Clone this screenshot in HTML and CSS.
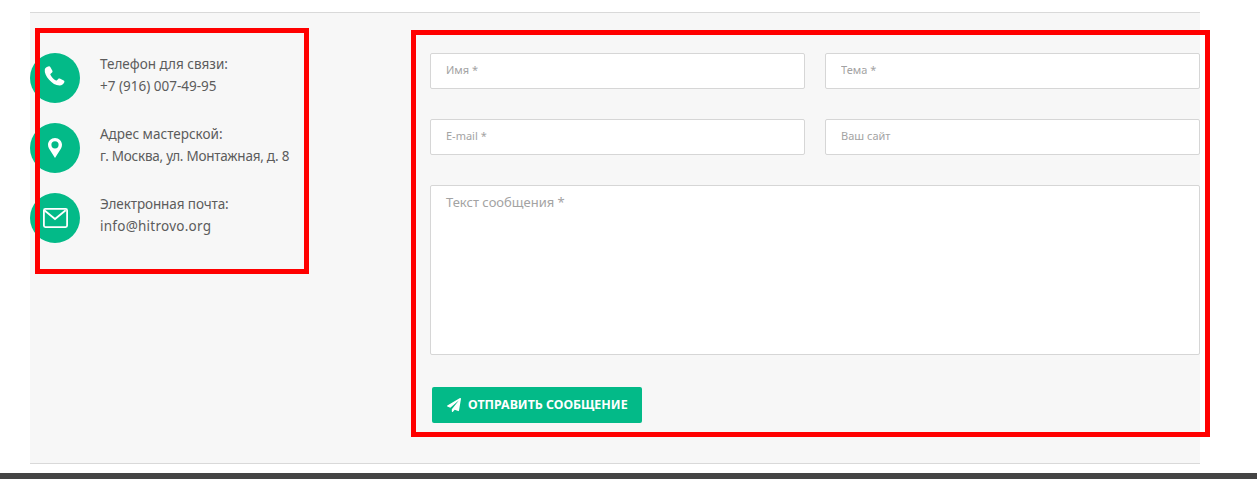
FILE: index.html
```html
<!DOCTYPE html>
<html lang="ru">
<head>
<meta charset="utf-8">
<title>Контакты</title>
<link rel="stylesheet" href="styles.css">
</head>
<body>
<section class="contact">
  <ul class="info">
    <li class="info-row">
      <span class="badge">
        <svg viewBox="0 0 50 50" width="50" height="50"><path class="solid" d="M18.4 13.4c.8-.4 1.5-.2 1.9.5l2.100 3.800c.3.600.2 1.200-.3 1.700l-1.500 1.300c-.3.300-.3.600-.2 1 .9 2 3.200 4.600 5.600 5.800.4.2.7.100 1-.2l1.200-1.400c.4-.5 1-.6 1.600-.3l3.900 2c.7.4.9 1 .6 1.700-.8 2-2.400 3.200-4.600 3.300-3.800.1-7.600-2.400-10.600-5.800-3-3.400-4.800-7.300-4.300-10.400.3-1.400 1.400-2.300 3.400-3z"/></svg>
      </span>
      <div class="info-text"><p>Телефон для связи:</p><p>+7 (916) 007-49-95</p></div>
    </li>
    <li class="info-row">
      <span class="badge">
        <svg viewBox="0 0 50 50" width="50" height="50"><path class="solid" fill-rule="evenodd" d="M25 15c-3.900 0-7 3-7 6.800 0 1.300.4 2.500 1 3.600L25 35l6-9.600c.6-1.100 1-2.300 1-3.600C32 18 28.900 15 25 15zm0 3.200a3.600 3.600 0 1 1 0 7.200 3.600 3.600 0 0 1 0-7.200z"/></svg>
      </span>
      <div class="info-text"><p>Адрес мастерской:</p><p class="tight">г. Москва, ул. Монтажная, д. 8</p></div>
    </li>
    <li class="info-row">
      <span class="badge">
        <svg viewBox="0 0 50 50" width="50" height="50"><rect class="line" x="13.900" y="15.900" width="23.200" height="18.200" rx="1.500"/><path class="line" d="M14.300 17.300L25 26l10.700-8.700"/></svg>
      </span>
      <div class="info-text"><p class="narrow">Электронная почта:</p><p class="wide">info@hitrovo.org</p></div>
    </li>
  </ul>
  <form class="form">
    <input class="field" type="text" placeholder="Имя *">
    <input class="field" type="text" placeholder="Тема *">
    <input class="field" type="text" placeholder="E-mail *">
    <input class="field" type="text" placeholder="Ваш сайт">
    <textarea class="field message" placeholder="Текст сообщения *"></textarea>
    <button class="send" type="button">
      <svg viewBox="0 0 512 512" width="14" height="14"><path class="solid" d="M476 3.200L12.500 270.600c-18.100 10.400-15.800 35.600 2.200 43.200L121 358.400l287.300-253.200c5.500-4.900 13.300 2.600 8.600 8.300L176 407v80.500c0 23.600 28.500 32.900 42.500 15.800L282 426l124.600 52.200c14.200 6 30.400-2.900 33-18.200l72-432C515 7.800 493.300-6.800 476 3.200z"/></svg>
      <span class="send-label">ОТПРАВИТЬ СООБЩЕНИЕ</span>
    </button>
  </form>
  <div class="mark mark-left"></div>
  <div class="mark mark-right"></div>
</section>
<footer class="bar"></footer>
</body>
</html>
```
FILE: styles.css
```css
html, body {
  margin: 0;
  padding: 0;
  background: #fff;
  overflow: hidden;
}
body {
  padding-top: 12px;
  font-family: "Noto Sans", "Open Sans", sans-serif;
}
.contact {
  position: relative;
  box-sizing: border-box;
  width: 1170px;
  height: 452px;
  margin-left: 30px;
  padding: 40px 0 0;
  display: flex;
  background: #f7f7f7;
  border-top: 1px solid #d9d9d9;
  border-bottom: 1px solid #d9d9d9;
}
.info {
  list-style: none;
  margin: 0;
  padding: 0;
  width: 400px;
  display: flex;
  flex-direction: column;
  gap: 20px;
}
.info-row {
  display: flex;
  gap: 20px;
  height: 50px;
}
.badge {
  flex: none;
  width: 50px;
  height: 50px;
  border-radius: 50%;
  background: #03ba88;
}
.badge svg { display: block; }
.solid { fill: #fff; }
.line {
  fill: none;
  stroke: #fff;
  stroke-width: 1.8;
}
.info-text {
  color: #5c5c5c;
  font-size: 13.5px;
  line-height: 22px;
}
.info-text p { margin: 0; }
.info-text .tight { letter-spacing: -0.24px; }
.info-text .narrow { letter-spacing: -0.1px; }
.info-text .wide { letter-spacing: 0.25px; }
.form {
  flex: 1;
  display: grid;
  grid-template-columns: 375px 375px;
  grid-template-rows: 36px 36px 170px 36px;
  column-gap: 20px;
  row-gap: 30px;
  align-content: start;
}
.field {
  box-sizing: border-box;
  width: 100%;
  height: 100%;
  margin: 0;
  padding: 0 15px 4px;
  background: #fff;
  border: 1px solid #d6d6d6;
  border-radius: 2px;
  outline: none;
  font-family: inherit;
  font-size: 11px;
  color: #555;
}
.field::placeholder {
  color: #a3a3a3;
  opacity: 1;
}
.message {
  grid-column: 1 / 3;
  padding: 7px 15px;
  font-size: 13px;
  resize: none;
  display: block;
}
.send {
  justify-self: start;
  margin: 2px 0 0 2px;
  box-sizing: border-box;
  width: 210px;
  height: 36px;
  display: flex;
  align-items: center;
  gap: 8px;
  padding: 0 0 0 15px;
  background: #03ba88;
  border: 0;
  border-radius: 2px;
  color: #fff;
  font-family: inherit;
  font-size: 12.4px;
  font-weight: 700;
  white-space: nowrap;
}
.send svg { flex: none; }
.send-label { margin: -2px 0 0 -1px; }
.mark {
  position: absolute;
  box-sizing: border-box;
  border: 5px solid #f00;
  pointer-events: none;
}
.mark-left {
  left: 5px;
  top: 15px;
  width: 274px;
  height: 246px;
}
.mark-right {
  left: 381px;
  top: 17px;
  width: 799px;
  height: 407px;
}
.bar {
  height: 6px;
  margin-top: 9px;
  background: #444;
}
```
